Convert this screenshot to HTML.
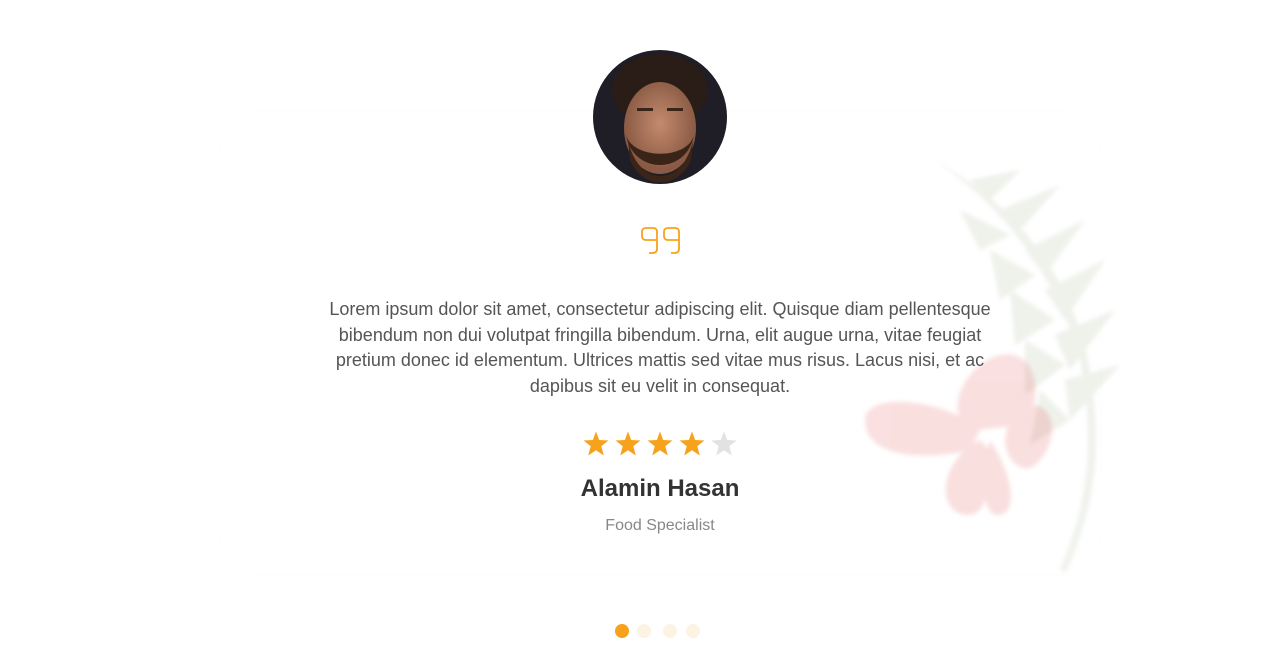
<!DOCTYPE html>
<html><head><meta charset="utf-8"><style>
html,body{margin:0;padding:0;background:#fff;width:1273px;height:660px;overflow:hidden;font-family:"Liberation Sans",Arial,sans-serif;}
.card{position:absolute;left:220px;top:112px;width:880px;height:462px;border-radius:40px;box-shadow:0 0 10px rgba(0,0,0,0.012);}
.txt{position:absolute;left:320px;width:680px;top:297px;text-align:center;font-size:18px;line-height:25.7px;color:#555;}
.name{position:absolute;left:0;width:1320px;top:475px;text-align:center;font-size:24px;font-weight:bold;color:#333;}
.role{position:absolute;left:0;width:1320px;top:517px;text-align:center;font-size:16px;color:#888;}
.dot{position:absolute;top:624px;width:14px;height:14px;border-radius:50%;background:#fdf3e3;}
</style></head><body>
<div class="card"></div>
<svg style="position:absolute;left:840px;top:140px;filter:blur(2px)" width="340" height="440" viewBox="0 0 340 440">
 <g opacity="0.09" fill="#4d6a2a">
  <path d="M90 18 C160 60 220 140 240 220 C255 300 250 360 220 430 L226 432 C258 360 262 300 248 220 C228 130 170 60 90 18Z"/>
  <path d="M130 40 l50 -10 l-30 30z M160 70 l60 -25 l-40 45z M185 110 l60 -30 l-40 55z M205 150 l60 -30 l-40 60z M215 195 l60 -25 l-45 60z M225 240 l55 -15 l-50 55z M120 70 l20 40 l30 -15z M150 110 l10 50 l35 -25z M170 150 l5 55 l40 -25z M185 200 l0 55 l40 -30z M200 250 l-10 55 l40 -25z"/>
 </g>
 <g opacity="0.14" fill="#d22">
  <path d="M130 235 C160 200 200 210 195 260 C190 290 170 285 140 290 C115 290 110 260 130 235Z"/>
  <path d="M170 270 C210 250 225 290 200 320 C185 340 165 320 165 300Z"/>
  <path d="M140 290 C110 260 25 250 25 280 C25 320 90 320 130 310Z"/>
  <path d="M140 300 C100 320 95 370 125 375 C150 378 150 340 150 310Z"/>
  <path d="M150 300 C170 330 180 370 160 375 C140 378 145 340 148 310Z"/>
 </g>
</svg>
<svg style="position:absolute;left:593px;top:50px" width="134" height="134" viewBox="0 0 134 134">
 <defs><clipPath id="c"><circle cx="67" cy="67" r="67"/></clipPath>
 <radialGradient id="f" cx="50%" cy="45%" r="50%"><stop offset="0" stop-color="#c48b6e"/><stop offset="1" stop-color="#8a5a44"/></radialGradient></defs>
 <g clip-path="url(#c)">
  <rect width="134" height="134" fill="#1f1d26"/>
  <ellipse cx="67" cy="40" rx="48" ry="36" fill="#2a1c16"/>
  <ellipse cx="67" cy="78" rx="36" ry="46" fill="url(#f)"/>
  <path d="M33 85 C40 125 94 125 101 85 C95 110 40 110 33 85Z" fill="#3a2418"/>
  <path d="M35 90 C45 138 90 138 100 90 L98 110 C85 140 50 140 37 110Z" fill="#3b2519"/>
  <rect x="44" y="58" width="16" height="3" fill="#3a2418"/><rect x="74" y="58" width="16" height="3" fill="#3a2418"/>
 </g>
</svg>
<svg style="position:absolute;left:640px;top:226px" width="42" height="30" viewBox="0 0 42 30" fill="none" stroke="#f7a21b" stroke-width="1.8">
 <path d="M17 14 H6 Q2 14 2 10 V6 Q2 2 6 2 H13 Q17 2 17 6 V23 Q17 27 12 27 H9"/>
 <path d="M39 14 H28 Q24 14 24 10 V6 Q24 2 28 2 H35 Q39 2 39 6 V23 Q39 27 34 27 H31"/>
</svg>
<div class="txt">Lorem ipsum dolor sit amet, consectetur adipiscing elit. Quisque diam pellentesque bibendum non dui volutpat fringilla bibendum. Urna, elit augue urna, vitae feugiat pretium donec id elementum. Ultrices mattis sed vitae mus risus. Lacus nisi, et ac dapibus sit eu velit in consequat.</div>
<svg style="position:absolute;left:583px;top:431px" width="156" height="27" viewBox="0 0 156 27">
 <defs><path id="s" d="M13 0.5 L16.2 9 L25.5 9.5 L18.3 15.3 L20.8 24.5 L13 19.3 L5.2 24.5 L7.7 15.3 L0.5 9.5 L9.8 9Z"/></defs>
 <use href="#s" x="0" fill="#f7a21b"/><use href="#s" x="32" fill="#f7a21b"/><use href="#s" x="64" fill="#f7a21b"/><use href="#s" x="96" fill="#f7a21b"/><use href="#s" x="128" fill="#e2e2e2"/>
</svg>
<div class="name">Alamin Hasan</div>
<div class="role">Food Specialist</div>
<div class="dot" style="left:615px;background:#f7a21b"></div>
<div class="dot" style="left:637px"></div>
<div class="dot" style="left:663px"></div>
<div class="dot" style="left:686px"></div>
</body></html>
